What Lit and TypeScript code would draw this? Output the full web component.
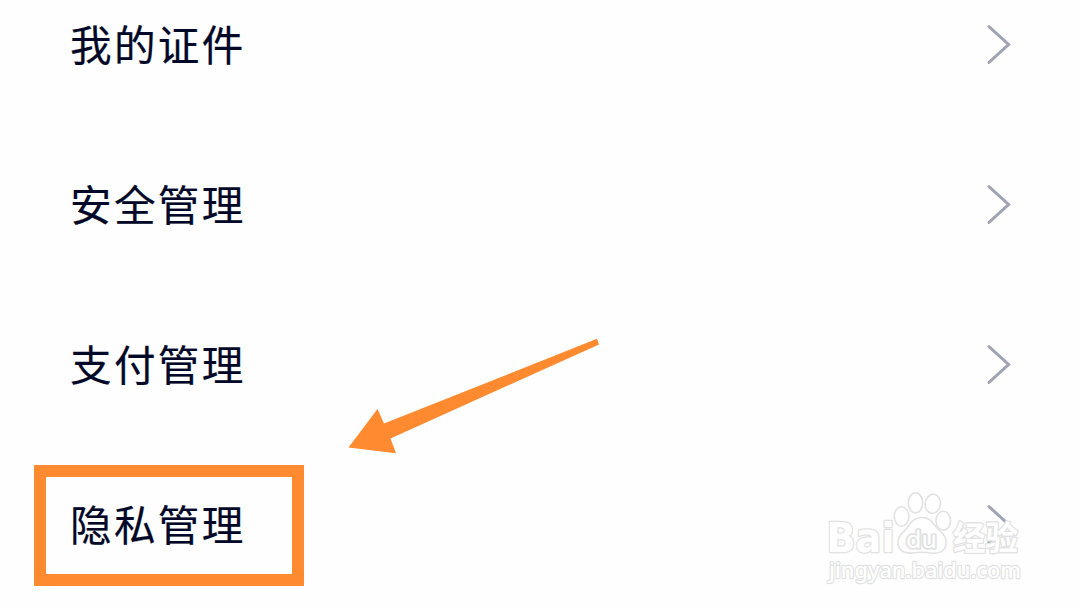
import { LitElement, css, html } from "lit";

export class MenuRow extends LitElement {
  static properties = {
    label: {},
  };

  label: string = "";

  static styles = css`
    :host {
      display: flex;
      align-items: center;
      justify-content: space-between;
      height: 160px;
      flex: none;
      padding: 0 68px 0 70px;
      box-sizing: border-box;
    }

    .label {
      color: #020827;
      font-size: 41.6px;
      line-height: 60px;
      letter-spacing: 2.3px;
      padding-bottom: 4px;
      -webkit-text-stroke: 0.2px #020827;
    }

    .chevron {
      display: block;
      width: 26px;
      height: 42px;
      fill: none;
      stroke: #a1a3b3;
      stroke-width: 3;
      stroke-linecap: round;
    }
  `;

  render() {
    return html`
      <span class="label">${this.label}</span>
      <svg class="chevron" viewBox="0 0 26 42">
        <path d="M3 2.6 L22.6 20.5 L3 38.4" />
      </svg>
    `;
  }
}

customElements.define("menu-row", MenuRow);

export class SiteWatermark extends LitElement {
  static styles = css`
    :host {
      display: block;
    }

    svg {
      display: block;
      width: 210px;
      height: 115px;
      fill: #fff;
      stroke: #e2e2e2;
      stroke-width: 1.6;
      stroke-linejoin: round;
    }

    text {
      paint-order: stroke;
      stroke-width: 2.6;
    }

    .brand {
      font-family: "DejaVu Sans", sans-serif;
      font-size: 41px;
      font-weight: bold;
    }

    .du {
      font-family: "DejaVu Sans", sans-serif;
      font-size: 23px;
      stroke-width: 3.6;
    }

    .name {
      font-family: "Noto Sans CJK SC", sans-serif;
      font-size: 33.5px;
      font-weight: bold;
    }

    .address {
      font-family: "Noto Sans", sans-serif;
      font-size: 22.5px;
      font-weight: 500;
      stroke-width: 2.4;
    }
  `;

  render() {
    return html`
      <svg viewBox="0 0 210 115">
        <text class="brand" x="6.5" y="72" textLength="68" lengthAdjust="spacingAndGlyphs">Bai</text>
        <ellipse cx="81.5" cy="36.5" rx="7.3" ry="9.7" />
        <ellipse cx="95.5" cy="22.8" rx="7.2" ry="10" />
        <ellipse cx="112.8" cy="23.8" rx="7.6" ry="9.6" transform="rotate(8 112.8 23.8)" />
        <ellipse cx="123.3" cy="40.8" rx="7.3" ry="9.5" />
        <path
          d="M102 37.5 C111 37.5 113 44 118 49 C123 54 127 57 126 64 C125 72 118 74 111 73 C105 72 98 72 92 73 C84 74 78 70 78 62 C78 55 83 53 87 48 C91 43 93 37.5 102 37.5 Z"
        />
        <text class="du" x="86" y="67.5" textLength="31" lengthAdjust="spacingAndGlyphs">du</text>
        <text class="name" x="133" y="69.5" textLength="65" lengthAdjust="spacingAndGlyphs">经验</text>
        <text class="address" x="9" y="98.3" textLength="192" lengthAdjust="spacingAndGlyphs">jingyan.baidu.com</text>
      </svg>
    `;
  }
}

customElements.define("site-watermark", SiteWatermark);

export class AppRoot extends LitElement {
  static properties = {
    items: { attribute: false },
  };

  items: string[] = ["我的证件", "安全管理", "支付管理", "隐私管理"];

  static styles = css`
    :host {
      display: block;
      position: relative;
      width: 1080px;
      height: 608px;
      overflow: hidden;
      background: #fefefe;
      font-family: "Noto Sans CJK SC", sans-serif;
    }

    /* the list is scrolled a little past its first row's top */
    .list {
      display: flex;
      flex-direction: column;
      margin-top: -35px;
    }

    .highlight {
      position: absolute;
      left: 34px;
      top: 465px;
      width: 270px;
      height: 121px;
      box-sizing: border-box;
      border: 12px solid #ff8a30;
    }

    .arrow {
      position: absolute;
      left: 340px;
      top: 330px;
      width: 270px;
      height: 130px;
      fill: #ff8a30;
    }

    .watermark {
      position: absolute;
      left: 820px;
      top: 480px;
    }
  `;

  render() {
    return html`
      <div class="list">
        ${this.items.map((item) => html`<menu-row .label=${item}></menu-row>`)}
      </div>
      <div class="highlight"></div>
      <svg class="arrow" viewBox="0 0 270 130">
        <path d="M8.5 117.5 L37.5 79 L44 93.5 L257 8.8 L259 14.5 L50.5 108.5 L56 123.2 Z" />
      </svg>
      <site-watermark class="watermark"></site-watermark>
    `;
  }
}

customElements.define("app-root", AppRoot);
